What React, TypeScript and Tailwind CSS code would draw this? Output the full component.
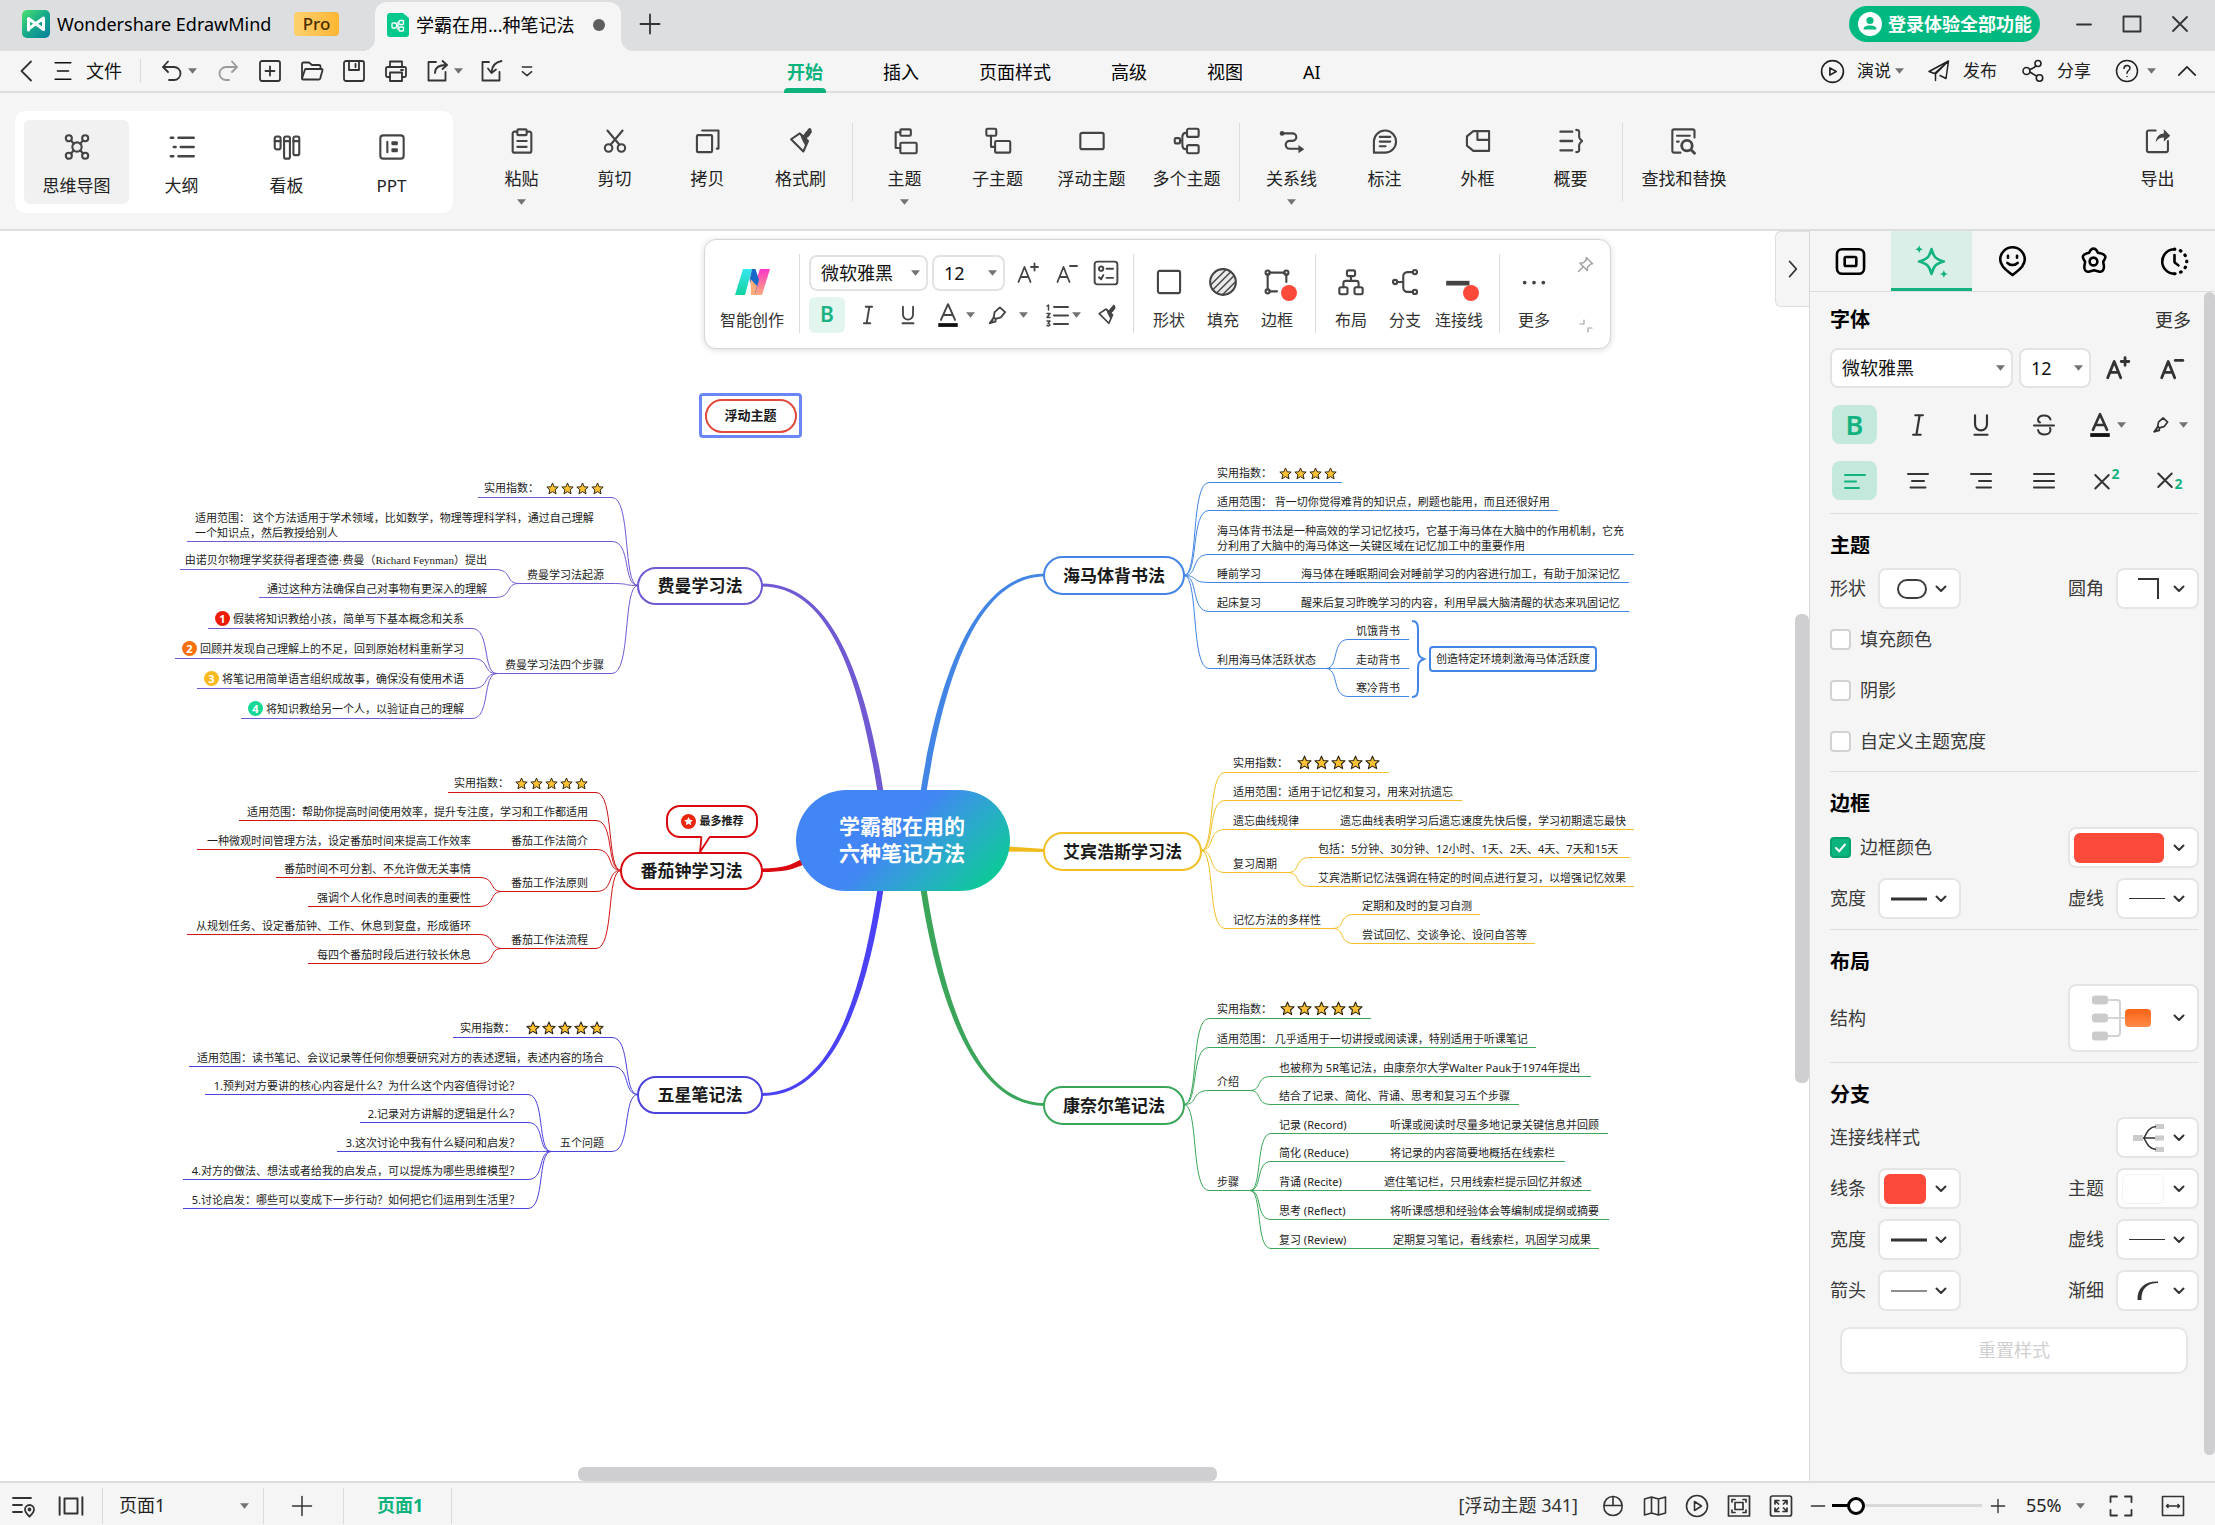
import React from "react";
import type { ReactNode } from "react";

/* ---------- shared bits ---------- */

type IcoProps = { s?: number; w?: number; className?: string; children: ReactNode };

function Ico({ s = 24, w = 1.6, className = "", children }: IcoProps) {
  return (
    <svg
      viewBox="0 0 24 24"
      width={s}
      height={s}
      fill="none"
      stroke="currentColor"
      strokeWidth={w}
      strokeLinecap="round"
      strokeLinejoin="round"
      className={"shrink-0 " + className}
      aria-hidden="true"
    >
      {children}
    </svg>
  );
}

function Caret({ className = "" }: { className?: string }) {
  return (
    <svg viewBox="0 0 10 6" width="9" height="6" className={"shrink-0 fill-[#737373] " + className} aria-hidden="true">
      <path d="M0 0h10L5 6z" />
    </svg>
  );
}

function Chevron() {
  return (
    <svg viewBox="0 0 12 8" width="12" height="8" fill="none" stroke="#333" strokeWidth="2" strokeLinecap="round" strokeLinejoin="round" className="shrink-0" aria-hidden="true">
      <path d="M1.500 1.500 6 6l4.500-4.500" />
    </svg>
  );
}

const fill = { fill: "currentColor", stroke: "none" };

const penPath = (
  <>
    <path d="M8 14 9 8.500 14.500 3.500 20 8.500 15.500 14 10 15.500z" />
    <path d="M8 14 4 20l6-1.500V15.500z" />
    <path d="M4 20l3-3" />
  </>
);

const brushPath = (
  <>
    <path d="M3.500 10.500 11 5.500l7 6.500-4 9z" />
    <path d="M11 5.500 14.500 7l1.500-2.500L19.500 2l2 2-2.500 4-2 1.500 1 2.500-2 5-3.500-7z" {...fill} />
    <path d="m19.500 2.500-4 5" strokeWidth="3" />
  </>
);

/* ---------- title bar ---------- */

function TitleBar() {
  return (
    <header className="flex h-[51px] shrink-0 items-center bg-[#dcdee0] pr-[26px] pb-[3px]">
      <svg viewBox="0 0 28 28" width="28" height="28" className="ml-[22px] shrink-0" aria-hidden="true">
        <defs>
          <linearGradient id="logo" x1="0" y1="0" x2="1" y2="1">
            <stop offset="0" stopColor="#4be36e" />
            <stop offset="0.500" stopColor="#16a98a" />
            <stop offset="1" stopColor="#087fa0" />
          </linearGradient>
        </defs>
        <rect width="28" height="28" rx="5" fill="url(#logo)" />
        <path d="M6.500 20V8.500l15 11V8l-15 11" fill="none" stroke="#fff" strokeWidth="3" strokeLinejoin="round" strokeLinecap="round" />
      </svg>
      <h1 className="ml-[7px] w-[218px] text-[18px] leading-6 whitespace-nowrap text-black">Wondershare EdrawMind</h1>
      <span className="ml-[19px] flex h-6 w-[45px] shrink-0 items-center justify-center rounded bg-linear-to-r from-[#fed06e] to-[#fdb62f] text-[17px] font-medium text-[#4a2e00]">Pro</span>
      <div className="relative -mb-[3px] ml-[36px] flex h-[49px] w-[246px] items-center self-end rounded-t-xl bg-[#f5f5f5] pb-1 pl-3">
        <span className="absolute bottom-0 -left-3 size-3 bg-[radial-gradient(circle_at_0_0,#dcdee0_12px,#f5f5f5_12px)]" />
        <span className="absolute -right-3 bottom-0 size-3 bg-[radial-gradient(circle_at_100%_0,#dcdee0_12px,#f5f5f5_12px)]" />
        <svg viewBox="0 0 22 24" width="22" height="24" className="shrink-0" aria-hidden="true">
          <path d="M3 0h13l6 5v16a3 3 0 0 1-3 3H3a3 3 0 0 1-3-3V3a3 3 0 0 1 3-3z" fill="#05c98c" />
          <g fill="none" stroke="#fff" strokeWidth="1.300">
            <rect x="5" y="10" width="4.500" height="5" rx="1" />
            <rect x="12" y="7.500" width="4.500" height="4" rx="1" />
            <rect x="12" y="14" width="4.500" height="4" rx="1" />
            <path d="M9.500 12.500H11M12 9.500h-1v6.500h1" />
          </g>
        </svg>
        <span className="ml-[7px] text-[18px] leading-6 whitespace-nowrap text-black">学霸在用...种笔记法</span>
        <span className="mr-4 ml-auto size-3 rounded-full bg-[#5e5e5e]" />
      </div>
      <button aria-label="新建标签" className="ml-[17px] text-[#333]">
        <Ico s={24} w={1.8}><path d="M12 2.500v19M2.500 12h19" /></Ico>
      </button>
      <button className="ml-auto flex h-9 items-center gap-[6px] rounded-full bg-[#00b980] pr-2 pl-[9px] text-[18px] font-bold whitespace-nowrap text-white">
        <svg viewBox="0 0 24 24" width="24" height="24" aria-hidden="true">
          <circle cx="12" cy="12" r="12" fill="#fff" />
          <circle cx="12" cy="8.500" r="3.600" fill="#00b980" />
          <path d="M5.500 17.500c0-3 2.500-4 6.500-4s6.500 1 6.500 4z" fill="#00b980" />
        </svg>
        登录体验全部功能
      </button>
      <button aria-label="最小化" className="ml-8 text-[#333]"><Ico s={24} w={1.8}><path d="M5 12.500h14" /></Ico></button>
      <button aria-label="最大化" className="ml-6 text-[#333]"><Ico s={24} w={1.8}><path d="M3.500 4.500h17v15h-17z" /></Ico></button>
      <button aria-label="关闭" className="mr-[-3px] ml-6 text-[#333]"><Ico s={24} w={1.8}><path d="m5 5 14 14M19 5 5 19" /></Ico></button>
    </header>
  );
}

/* ---------- menu row ---------- */

const quick: { label: string; ml: string; icon: ReactNode; caret?: boolean; dim?: boolean }[] = [
  { label: "撤销", ml: "ml-[19px]", caret: true, icon: <><path d="M8 2.500 3 8l5 5" /><path d="M3.500 8H14a6.500 6.500 0 0 1 0 13H9" /></> },
  { label: "重做", ml: "ml-[19px]", dim: true, icon: <><path d="m16 2.500 5 5.500-5 5" /><path d="M20.500 8H10a6.500 6.500 0 0 0 0 13h3" /></> },
  { label: "新建", ml: "ml-[18px]", icon: <><rect x="2" y="2" width="20" height="20" rx="2" /><path d="M12 7.500v9M7.500 12h9" /></> },
  { label: "打开", ml: "ml-[18px]", icon: <><path d="M2 19V5a1.500 1.500 0 0 1 1.500-1.500H9L12 6h7a1.500 1.500 0 0 1 1.500 1.500V10" /><path d="m2 19.500 3-9a1 1 0 0 1 1-.5h15.500a1 1 0 0 1 1 1.300l-2.300 8.200a1.500 1.500 0 0 1-1.400 1H3a1 1 0 0 1-1-1z" /></> },
  { label: "保存", ml: "ml-[18px]", icon: <><rect x="2" y="2" width="20" height="20" rx="2" /><path d="M7 2v9h10V2M13.500 5v3" /></> },
  { label: "打印", ml: "ml-[18px]", icon: <><path d="M6 8V2.500h12V8" /><path d="M6 18H3.500A1.500 1.500 0 0 1 2 16.500V9.500A1.500 1.500 0 0 1 3.500 8h17A1.500 1.500 0 0 1 22 9.500v7a1.500 1.500 0 0 1-1.500 1.500H18" /><path d="M6 13.500h12V22H6zM17 11h2" /></> },
  { label: "分享文件", ml: "ml-[18px]", caret: true, icon: <><path d="M10 3H2.500v18.500h17V13" /><path d="M9 14c0-5 4-8 11.500-8" /><path d="m16.500 2 4.500 4-4.500 4" /></> },
  { label: "导入", ml: "ml-[17px]", icon: <><path d="M9 3H2.500v18.500h17V13" /><path d="M21.500 2C16 3 12 7 11.500 13" /><path d="m8 9.500 3.500 4.500 4.500-3.500" /></> },
];

function MenuRow() {
  return (
    <nav className="relative flex h-[42px] shrink-0 items-center border-b-2 border-[#dddddd] bg-[#f5f5f5] text-[#333]">
      <button aria-label="返回" className="ml-[14px]"><Ico s={24} w={1.8}><path d="M17 2.500 7.500 12l9.500 9.500" /></Ico></button>
      <button className="ml-[14px] flex items-center gap-3 text-[18px] text-[#111]">
        <Ico s={22} w={1.8}><path d="M3.500 3h17M6 12h12M3.500 21h17" /></Ico>
        文件
      </button>
      <span className="ml-[18px] h-6 w-px bg-[#dadada]" />
      {quick.map((q) => (
        <button key={q.label} aria-label={q.label} className={"flex items-center gap-[4px] " + q.ml + (q.dim ? " text-[#9a9a9a]" : "")}>
          <Ico s={24} w={1.8}>{q.icon}</Ico>
          {q.caret && <Caret />}
        </button>
      ))}
      <button aria-label="更多工具" className="ml-[15px]"><Ico s={16} w={2.200}><path d="M5 6h14M5 13l7 6 7-6" /></Ico></button>
      <div className="absolute top-0 left-[787px] flex h-[42px] items-center gap-[60px] text-[18px] whitespace-nowrap text-black">
        <a href="#start" className="relative flex h-[42px] items-center font-bold text-[#0db27d]">
          开始
          <span className="absolute -inset-x-[3px] bottom-0 h-[5px] rounded-t bg-[#0db27d]" />
        </a>
        <a href="#insert">插入</a>
        <a href="#page">页面样式</a>
        <a href="#advanced">高级</a>
        <a href="#view">视图</a>
        <a href="#ai">AI</a>
      </div>
      <div className="ml-auto flex items-center pr-[17px] text-[17px] whitespace-nowrap text-[#222]">
        <button className="flex items-center">
          <Ico s={25} w={1.6}><circle cx="12" cy="12" r="10.500" /><path d="M9.500 8.500v7l6-3.500z" /></Ico>
          <span className="ml-3">演说</span>
          <Caret className="ml-1" />
        </button>
        <button className="ml-[23px] flex items-center gap-3">
          <Ico s={24} w={1.5}><path d="M21.500 2 2 12.500l5.500 2zM21.500 2 19 19.500l-6-3M21.500 2 8.500 15v6.500" /></Ico>
          发布
        </button>
        <button className="ml-6 flex items-center gap-3">
          <Ico s={24} w={1.6}><circle cx="5.500" cy="12" r="3.500" /><circle cx="17" cy="4.500" r="3" /><circle cx="18.500" cy="19" r="3.200" /><path d="M8.500 10.500C12 9.500 13.500 9 15 6.800M8.800 13l6.700 4" /></Ico>
          分享
        </button>
        <button aria-label="帮助" className="ml-6 flex items-center gap-2">
          <Ico s={24} w={1.500}><circle cx="12" cy="12" r="10.500" /><path d="M9 9.500c0-4 6-4 6-.5 0 2.500-3 2.500-3 5.200M12 17.500v.1" /></Ico>
          <Caret />
        </button>
        <button aria-label="收起" className="ml-5"><Ico s={22} w={1.800}><path d="m3 16.500 9-9 9 9" /></Ico></button>
      </div>
    </nav>
  );
}

/* ---------- ribbon ---------- */

const ic = {
  mind: <><circle cx="12" cy="12" r="4" /><circle cx="5" cy="4.500" r="2.600" /><circle cx="19" cy="4.500" r="2.600" /><circle cx="5" cy="19.500" r="2.600" /><circle cx="19" cy="19.500" r="2.600" /><path d="m6.800 6.500 2.500 2.700M17.200 6.500l-2.500 2.700M6.800 17.500l2.500-2.700M17.200 17.500l-2.500-2.700" /></>,
  outline: <><path d="M2.500 4h2M9 4h13M5 12h1.500M11 12h11M2.500 20h2M9 20h13" strokeWidth="2.200" /></>,
  board: <><rect x="1.500" y="3" width="5" height="11" rx="1.500" /><rect x="9.500" y="3" width="5" height="19" rx="1.500" /><rect x="17.500" y="3" width="5" height="16" rx="1.500" /><path d="M1.500 7h5M9.500 7h5M17.500 7h5" /></>,
  ppt: <><rect x="2" y="2" width="20" height="20" rx="2.500" /><path d="M8 7.500v9" /><rect x="11.500" y="7" width="5.500" height="3.500" rx="1" {...fill} /><rect x="11.500" y="13" width="5.500" height="3.500" rx="1" {...fill} /></>,
  paste: <><path d="M7.500 4H5.500A1.500 1.500 0 0 0 4 5.500v15A1.500 1.500 0 0 0 5.500 22h13a1.500 1.500 0 0 0 1.500-1.500v-15A1.500 1.500 0 0 0 18.500 4h-2" /><rect x="8" y="2" width="8" height="5" rx="1" /><path d="M8 12h8M8 17h8" /></>,
  cut: <><circle cx="6.500" cy="18" r="3.200" /><circle cx="17.500" cy="18" r="3.200" /><path d="M5.500 3 15.800 15.200M18.500 3 8.200 15.200" /></>,
  copy: <><rect x="2.500" y="7" width="13" height="14.500" rx="1" /><path d="M7 3h14v15.500h-1.500" /></>,
  topic: <><rect x="8" y="2" width="9" height="5.500" rx="1" /><rect x="8" y="13.500" width="14" height="9" rx="1" /><path d="M8 4.500H4V18h4" /></>,
  sub: <><rect x="2" y="1.500" width="8.500" height="6" rx="1" /><rect x="9.500" y="12" width="13" height="10" rx="1" /><path d="M6 7.500V17h3.500" /></>,
  float: <><rect x="2" y="5" width="20" height="14" rx="1.500" /></>,
  multi: <><rect x="1.500" y="9.500" width="4.500" height="4.500" rx="1" /><rect x="12" y="1.500" width="10" height="7" rx="1.500" /><rect x="12" y="15.500" width="10" height="7" rx="1.500" /><path d="M6 11.800h2M12 5H11c-2.500 0-3 1.500-3 4v5.500c0 3 .5 4.500 3 4.500h1" /></>,
  rel: <><circle cx="3.500" cy="5.500" r="2" {...fill} /><path d="M4 5.500h8.500a3.200 3.200 0 0 1 0 6.400H10a3.400 3.400 0 0 0 0 6.800h9" /><path d="M17.500 15.500v7L22.500 19z" {...fill} /></>,
  note: <><path d="M2.500 12A9.500 9.500 0 1 1 12 22H2.500z" /><path d="M7.500 8.500h9M7.500 12.500h9M7.500 16.500h5" /></>,
  frame: <><path d="M8 3.500h13.500v17H8L2.500 16V8z" /><path d="M11.500 3.500V11h10" /></>,
  summary: <><path d="M3 4h10M3 12h10M3 20h10" strokeWidth="2" /><path d="M16.500 2.500c4 0 2 3 2.500 6 .3 2.500 2.500 3 2.500 3.500s-2.200 1-2.500 3.500c-.5 3 1.500 6-2.500 6" /></>,
  find: <><path d="M9 22H3.500A1.500 1.500 0 0 1 2 20.500v-17A1.500 1.500 0 0 1 3.500 2h16A1.500 1.500 0 0 1 21 3.500V9" /><path d="M6 7.500h11M6 12.500h1.500" /><circle cx="14.500" cy="16" r="4.500" strokeWidth="2.400" /><path d="m18 19.500 3 3" strokeWidth="2.400" /></>,
  exp: <><path d="M10 3H4a1.500 1.500 0 0 0-1.500 1.500v15.500A1.500 1.500 0 0 0 4 21.500h15a1.500 1.500 0 0 0 1.500-1.500v-8" /><path d="M10 13c.5-5 3.500-7.500 7-7.500V2l5.500 5.500-5.500 5V9C14 9 12 10 10 13z" {...fill} /></>,
};

function RibbonButton({ icon, label, caret, width = "w-[93px]" }: { icon: ReactNode; label: string; caret?: boolean; width?: string }) {
  return (
    <button className={"flex shrink-0 flex-col items-center pt-[34px] text-[#444] " + width}>
      <Ico s={28} w={1.800}>{icon}</Ico>
      <span className="mt-3 text-[17px] leading-6 whitespace-nowrap text-[#222]">{label}</span>
      {caret && <Caret className="mt-2" />}
    </button>
  );
}

const Rule = () => <span className="mx-[5px] mt-[30px] h-[78px] w-px shrink-0 bg-[#dcdcdc]" />;

function Ribbon() {
  const views: [string, ReactNode][] = [["思维导图", ic.mind], ["大纲", ic.outline], ["看板", ic.board], ["PPT", ic.ppt]];
  return (
    <section className="flex h-[138px] shrink-0 items-start border-b-2 border-[#dddddd] bg-[#f5f5f5]">
      <div className="mt-[18px] ml-[15px] flex h-[102px] w-[438px] shrink-0 items-center rounded-[10px] bg-white pl-[9px]">
        {views.map(([label, icon], i) => (
          <button key={label} className={"flex h-[84px] w-[105px] flex-col items-center rounded-md pt-[13px] text-[#444] " + (i === 0 ? "bg-[#f1f1f1]" : "")}>
            <Ico s={28} w={1.800}>{icon}</Ico>
            <span className="mt-[13px] text-[17px] leading-6 text-[#222]">{label}</span>
          </button>
        ))}
      </div>
      <div className="ml-[22px] flex flex-1 items-start">
        <RibbonButton icon={ic.paste} label="粘贴" caret />
        <RibbonButton icon={ic.cut} label="剪切" />
        <RibbonButton icon={ic.copy} label="拷贝" />
        <RibbonButton icon={brushPath} label="格式刷" />
        <Rule />
        <RibbonButton icon={ic.topic} label="主题" caret />
        <RibbonButton icon={ic.sub} label="子主题" />
        <RibbonButton icon={ic.float} label="浮动主题" width="w-[95px]" />
        <RibbonButton icon={ic.multi} label="多个主题" width="w-[95px]" />
        <Rule />
        <RibbonButton icon={ic.rel} label="关系线" caret />
        <RibbonButton icon={ic.note} label="标注" />
        <RibbonButton icon={ic.frame} label="外框" />
        <RibbonButton icon={ic.summary} label="概要" />
        <Rule />
        <RibbonButton icon={ic.find} label="查找和替换" width="w-[112px]" />
      </div>
      <div className="pr-[11px]">
        <RibbonButton icon={ic.exp} label="导出" />
      </div>
    </section>
  );
}

/* ---------- mind map ---------- */

const VIEW_Y = 231;

type Stars = { n: number; size: number; gap: number; lead: number };
type Topic = {
  x1: number;
  x2: number;
  y: number;
  text: string;
  latin?: boolean;
  lines?: 2;
  stars?: Stars;
  badge?: [string, string];
  to?: [number, number];
};
type Branch = { color: string; side: "l" | "r"; topics: Topic[] };

const branches: Branch[] = [
  {
    color: "#7059d3",
    side: "l",
    topics: [
      { x1: 478, x2: 612, y: 497, text: "实用指数：", stars: { n: 4, size: 13, gap: 2, lead: 7 }, to: [638, 585] },
      { x1: 187, x2: 612, y: 541, text: "适用范围： 这个方法适用于学术领域，比如数学，物理等理科学科，通过自己理解\n一个知识点，然后教授给别人", lines: 2, to: [638, 585] },
      { x1: 519, x2: 612, y: 583, text: "费曼学习法起源", to: [638, 585] },
      { x1: 180, x2: 495, y: 569, text: "由诺贝尔物理学奖获得者理查德·费曼（Richard Feynman）提出", latin: true, to: [519, 583] },
      { x1: 259, x2: 495, y: 597, text: "通过这种方法确保自己对事物有更深入的理解", to: [519, 583] },
      { x1: 497, x2: 612, y: 673, text: "费曼学习法四个步骤", to: [638, 585] },
      { x1: 208, x2: 472, y: 628, text: "假装将知识教给小孩，简单写下基本概念和关系", badge: ["1", "#ec1c06"], to: [497, 673] },
      { x1: 175, x2: 472, y: 658, text: "回顾并发现自己理解上的不足，回到原始材料重新学习", badge: ["2", "#fa700c"], to: [497, 673] },
      { x1: 197, x2: 472, y: 688, text: "将笔记用简单语言组织成故事，确保没有使用术语", badge: ["3", "#fab91e"], to: [497, 673] },
      { x1: 241, x2: 472, y: 718, text: "将知识教给另一个人，以验证自己的理解", badge: ["4", "#15d894"], to: [497, 673] },
    ],
  },
  {
    color: "#cf1212",
    side: "l",
    topics: [
      { x1: 448, x2: 596, y: 792, text: "实用指数：", stars: { n: 5, size: 13, gap: 2, lead: 6 }, to: [621, 870] },
      { x1: 239, x2: 596, y: 820, text: "适用范围：帮助你提高时间使用效率，提升专注度，学习和工作都适用", to: [621, 870] },
      { x1: 478, x2: 596, y: 849, text: "番茄工作法简介", to: [621, 870] },
      { x1: 197, x2: 479, y: 849, text: "一种微观时间管理方法，设定番茄时间来提高工作效率" },
      { x1: 502, x2: 596, y: 891, text: "番茄工作法原则", to: [621, 870] },
      { x1: 276, x2: 479, y: 877, text: "番茄时间不可分割、不允许做无关事情", to: [502, 891] },
      { x1: 308, x2: 479, y: 906, text: "强调个人化作息时间表的重要性", to: [502, 891] },
      { x1: 502, x2: 596, y: 948, text: "番茄工作法流程", to: [621, 870] },
      { x1: 187, x2: 479, y: 934, text: "从规划任务、设定番茄钟、工作、休息到复盘，形成循环", to: [502, 948] },
      { x1: 308, x2: 479, y: 963, text: "每四个番茄时段后进行较长休息", to: [502, 948] },
    ],
  },
  {
    color: "#4b42dc",
    side: "l",
    topics: [
      { x1: 453, x2: 612, y: 1037, text: "实用指数：", stars: { n: 5, size: 14, gap: 2, lead: 11 }, to: [638, 1094] },
      { x1: 189, x2: 612, y: 1066, text: "适用范围：读书笔记、会议记录等任何你想要研究对方的表述逻辑，表述内容的场合", to: [638, 1094] },
      { x1: 551, x2: 612, y: 1151, text: "五个问题", to: [638, 1094] },
      { x1: 205, x2: 528, y: 1094, text: "1.预判对方要讲的核心内容是什么？为什么这个内容值得讨论？", to: [551, 1151] },
      { x1: 360, x2: 528, y: 1122, text: "2.记录对方讲解的逻辑是什么？", to: [551, 1151] },
      { x1: 337, x2: 528, y: 1151, text: "3.这次讨论中我有什么疑问和启发？", to: [551, 1151] },
      { x1: 183, x2: 528, y: 1179, text: "4.对方的做法、想法或者给我的启发点，可以提炼为哪些思维模型？", to: [551, 1151] },
      { x1: 183, x2: 528, y: 1208, text: "5.讨论启发：哪些可以变成下一步行动？如何把它们运用到生活里？", to: [551, 1151] },
    ],
  },
  {
    color: "#4385e5",
    side: "r",
    topics: [
      { x1: 1209, x2: 1342, y: 482, text: "实用指数：", stars: { n: 4, size: 13, gap: 2, lead: 7 }, to: [1184, 575] },
      { x1: 1209, x2: 1558, y: 510, text: "适用范围： 背一切你觉得难背的知识点，刷题也能用，而且还很好用", to: [1184, 575] },
      { x1: 1209, x2: 1634, y: 554, text: "海马体背书法是一种高效的学习记忆技巧，它基于海马体在大脑中的作用机制，它充\n分利用了大脑中的海马体这一关键区域在记忆加工中的重要作用", lines: 2, to: [1184, 575] },
      { x1: 1209, x2: 1293, y: 582, text: "睡前学习", to: [1184, 575] },
      { x1: 1293, x2: 1629, y: 582, text: "海马体在睡眠期间会对睡前学习的内容进行加工，有助于加深记忆" },
      { x1: 1209, x2: 1293, y: 611, text: "起床复习", to: [1184, 575] },
      { x1: 1293, x2: 1629, y: 611, text: "醒来后复习昨晚学习的内容，利用早晨大脑清醒的状态来巩固记忆" },
      { x1: 1209, x2: 1326, y: 668, text: "利用海马体活跃状态", to: [1184, 575] },
      { x1: 1348, x2: 1409, y: 639, text: "饥饿背书", to: [1326, 668] },
      { x1: 1348, x2: 1409, y: 668, text: "走动背书", to: [1326, 668] },
      { x1: 1348, x2: 1409, y: 696, text: "寒冷背书", to: [1326, 668] },
    ],
  },
  {
    color: "#f2bf26",
    side: "r",
    topics: [
      { x1: 1225, x2: 1389, y: 772, text: "实用指数：", stars: { n: 5, size: 15, gap: 2, lead: 9 }, to: [1201, 850] },
      { x1: 1225, x2: 1462, y: 800, text: "适用范围：适用于记忆和复习，用来对抗遗忘", to: [1201, 850] },
      { x1: 1225, x2: 1332, y: 829, text: "遗忘曲线规律", to: [1201, 850] },
      { x1: 1332, x2: 1634, y: 829, text: "遗忘曲线表明学习后遗忘速度先快后慢，学习初期遗忘最快" },
      { x1: 1225, x2: 1288, y: 872, text: "复习周期", to: [1201, 850] },
      { x1: 1310, x2: 1630, y: 857, text: "包括：5分钟、30分钟、12小时、1天、2天、4天、7天和15天", to: [1288, 872] },
      { x1: 1310, x2: 1634, y: 886, text: "艾宾浩斯记忆法强调在特定的时间点进行复习，以增强记忆效果", to: [1288, 872] },
      { x1: 1225, x2: 1333, y: 928, text: "记忆方法的多样性", to: [1201, 850] },
      { x1: 1354, x2: 1480, y: 914, text: "定期和及时的复习自测", to: [1333, 928] },
      { x1: 1354, x2: 1535, y: 943, text: "尝试回忆、交谈争论、设问自答等", to: [1333, 928] },
    ],
  },
  {
    color: "#3ba55a",
    side: "r",
    topics: [
      { x1: 1209, x2: 1371, y: 1018, text: "实用指数：", stars: { n: 5, size: 15, gap: 2, lead: 8 }, to: [1184, 1104] },
      { x1: 1209, x2: 1536, y: 1047, text: "适用范围： 几乎适用于一切讲授或阅读课，特别适用于听课笔记", to: [1184, 1104] },
      { x1: 1209, x2: 1250, y: 1090, text: "介绍", to: [1184, 1104] },
      { x1: 1271, x2: 1591, y: 1076, text: "也被称为 5R笔记法，由康奈尔大学Walter Pauk于1974年提出", to: [1250, 1090] },
      { x1: 1271, x2: 1519, y: 1104, text: "结合了记录、简化、背诵、思考和复习五个步骤", to: [1250, 1090] },
      { x1: 1209, x2: 1250, y: 1190, text: "步骤", to: [1184, 1104] },
      { x1: 1271, x2: 1382, y: 1133, text: "记录 (Record)", to: [1250, 1190] },
      { x1: 1382, x2: 1608, y: 1133, text: "听课或阅读时尽量多地记录关键信息并回顾" },
      { x1: 1271, x2: 1382, y: 1161, text: "简化 (Reduce)", to: [1250, 1190] },
      { x1: 1382, x2: 1565, y: 1161, text: "将记录的内容简要地概括在线索栏" },
      { x1: 1271, x2: 1376, y: 1190, text: "背诵 (Recite)", to: [1250, 1190] },
      { x1: 1376, x2: 1591, y: 1190, text: "遮住笔记栏，只用线索栏提示回忆并叙述" },
      { x1: 1271, x2: 1382, y: 1219, text: "思考 (Reflect)", to: [1250, 1190] },
      { x1: 1382, x2: 1609, y: 1219, text: "将听课感想和经验体会等编制成提纲或摘要" },
      { x1: 1271, x2: 1385, y: 1248, text: "复习 (Review)", to: [1250, 1190] },
      { x1: 1385, x2: 1599, y: 1248, text: "定期复习笔记，看线索栏，巩固学习成果" },
    ],
  },
];

const mains = [
  { text: "费曼学习法", x: 637, y: 567, w: 126, h: 38, color: "#7059d3" },
  { text: "番茄钟学习法", x: 620, y: 852, w: 143, h: 38, color: "#d9090f" },
  { text: "五星笔记法", x: 637, y: 1076, w: 126, h: 38, color: "#4b42dc" },
  { text: "海马体背书法", x: 1043, y: 556, w: 142, h: 39, color: "#4385e5" },
  { text: "艾宾浩斯学习法", x: 1043, y: 832, w: 159, h: 39, color: "#f2bf26" },
  { text: "康奈尔笔记法", x: 1043, y: 1086, w: 142, h: 39, color: "#3ba55a" },
];

function link(t: Topic, side: "l" | "r") {
  if (!t.to) return "";
  const x = side === "l" ? t.x2 : t.x1;
  const dx = t.to[0] - x;
  return `M${x} ${t.y + 0.5}C${x + dx * 0.75} ${t.y + 0.5} ${x + dx * 0.4} ${t.to[1] + 0.5} ${t.to[0]} ${t.to[1] + 0.5}`;
}

function StarRow({ s }: { s: Stars }) {
  return (
    <span className="flex shrink-0" style={{ gap: s.gap, marginLeft: s.lead }}>
      {Array.from({ length: s.n }, (_, i) => (
        <svg key={i} viewBox="0 0 24 24" width={s.size} height={s.size} aria-hidden="true">
          <path d="m12 1.800 3 7 7.500.6-5.700 5 1.800 7.400L12 17.800l-6.600 4 1.800-7.400-5.700-5 7.500-.6z" fill="#fcc135" stroke="#2b2412" strokeWidth="1.800" strokeLinejoin="round" />
        </svg>
      ))}
    </span>
  );
}

function TopicBox({ t, side, color }: { t: Topic; side: "l" | "r"; color: string }) {
  const h = t.lines ? 33 : 19;
  return (
    <div
      className={
        "absolute flex items-end border-b px-2 text-[11px] leading-[15px] whitespace-pre text-[#1c1c1c] " +
        (side === "l" && !t.lines ? "justify-end" : "justify-start") +
        (t.stars || t.badge ? " pb-[2px]" : " pb-px") +
        (t.latin ? " font-['Liberation_Serif','Noto_Sans_CJK_SC',serif]" : "")
      }
      style={{ left: t.x1, top: t.y + 1 - h - VIEW_Y, width: t.x2 - t.x1, height: h, borderColor: color }}
    >
      {t.badge && (
        <span className="mr-[3px] flex size-[15px] shrink-0 items-center justify-center rounded-full text-[11px] font-bold text-white" style={{ backgroundColor: t.badge[1] }}>
          {t.badge[0]}
        </span>
      )}
      {t.text}
      {t.stars && <StarRow s={t.stars} />}
    </div>
  );
}

function MindMap() {
  return (
    <>
      <svg className="absolute inset-0 size-full" aria-hidden="true">
        <g transform="translate(0 -231)" fill="none">
          <path fill="#7059d3" d="M762 583.500C836 583.500 868 690 884 795L878 795C862 692 834 586.500 762 586.500z" />
          <path fill="#4385e5" d="M1045 573.500C971 573.500 936 690 920 795L926 795C942 692 973 576.500 1045 576.500z" />
          <path fill="#4b42f5" d="M762 1093C834 1093 862 990 878 886L884 886C868 992 836 1096 762 1096z" />
          <path fill="#3ba55a" d="M1045 1103C973 1103 942 990 926 886L920 886C936 992 971 1106 1045 1106z" />
          <path fill="#d9090f" d="M762 868.500C782 868.500 792 865 803 858L806 863C794 870 782 872 762 872z" />
          <path fill="#f2b91a" d="M1008 846.500 1045 849v3L1008 851.500z" />
          {branches.map((b) => (
            <path key={b.color} stroke={b.color} strokeWidth="1" d={b.topics.map((t) => link(t, b.side)).join("")} />
          ))}
          <path stroke="#4385e5" strokeWidth="2" d="M1412 621c5 0 6 3 6 9v19c0 6 1 8 6 10-5 2-6 4-6 10v19c0 6-1 9-6 9" />
        </g>
      </svg>
      {branches.map((b) => b.topics.map((t) => <TopicBox key={t.x1 + "-" + t.y} t={t} side={b.side} color={b.color} />))}
      {mains.map((m) => (
        <div
          key={m.text}
          className="absolute flex items-center justify-center rounded-full border-2 bg-white text-[17px] leading-6 font-bold whitespace-nowrap text-[#1a1a1a]"
          style={{ left: m.x, top: m.y - VIEW_Y, width: m.w, height: m.h, borderColor: m.color }}
        >
          {m.text}
        </div>
      ))}
      <div className="absolute top-[559px] left-[796px] flex h-[101px] w-[214px] items-center justify-center rounded-full bg-linear-135 from-[#4285f4] from-45% to-[#0cc898] to-90% pr-[2px] pb-[2px] text-center text-[21px] leading-[27px] font-bold text-white">
        学霸都在用的
        <br />
        六种笔记方法
      </div>
      <div className="absolute top-[415px] left-[1429px] flex h-[26px] w-[168px] items-center justify-center rounded border-2 border-[#4385e5] text-[11px] whitespace-nowrap text-[#1c1c1c]">创造特定环境刺激海马体活跃度</div>
      <div className="absolute top-[574px] left-[666px] flex h-[33px] w-[92px] items-center justify-center gap-1 rounded-[14px] border-2 border-[#d9090f] text-[11px] font-bold whitespace-nowrap text-[#1a1a1a]">
        <svg viewBox="0 0 16 16" width="15" height="15" aria-hidden="true">
          <circle cx="8" cy="8" r="8" fill="#f0250d" />
          <path d="m8 3.200 1.400 3 3.300.4-2.400 2.200.6 3.300L8 10.500l-2.900 1.600.6-3.300-2.400-2.200 3.300-.4z" fill="#fff" />
        </svg>
        最多推荐
      </div>
      <svg viewBox="0 0 16 18" width="16" height="18" className="absolute top-[604px] left-[697px]" aria-hidden="true">
        <path d="M4 1h9v2H4z" fill="#fff" />
        <path d="M4.500 1.500 3 17 13 1.500" fill="#fff" stroke="#d9090f" strokeWidth="1.800" strokeLinejoin="round" />
      </svg>
      <div className="absolute top-[162px] left-[699px] flex h-[45px] w-[103px] items-center justify-center rounded-sm border-[3px] border-[#6b86f6]">
        <div className="flex h-[34px] w-[92px] items-center justify-center rounded-full border-2 border-[#e04a3e] text-[13px] font-bold whitespace-nowrap text-[#1a1a1a]">浮动主题</div>
      </div>
    </>
  );
}

/* ---------- floating toolbar ---------- */

function FontSelect({ label, value, className }: { label: string; value: string; className: string }) {
  return (
    <div className={"relative shrink-0 " + className}>
      <select aria-label={label} defaultValue={value} className="h-full w-full appearance-none rounded-lg border-2 border-[#e3e3e3] bg-white pl-[10px] text-[18px] text-[#111]">
        <option>{value}</option>
      </select>
      <Caret className="pointer-events-none absolute top-1/2 right-2 -translate-y-1/2" />
    </div>
  );
}

const aPlus = <><path d="M2.500 21 8.500 6l6 15M4.700 16h7.600" /><path d="M18.500 2.500v7M15 6h7" /></>;
const aMinus = <><path d="M2.500 21 8.500 6l6 15M4.700 16h7.600" /><path d="M15 5h7" /></>;
const italic = <path d="M9.500 3h7M7.500 21h7M13.500 3l-3 18" />;
const underline = <path d="M6.500 3v8.500a5.500 5.500 0 0 0 11 0V3M6 21h12" />;
const fontColor = <><path d="M5.500 16.500 12 2l6.500 14.500M7.800 12h8.400" /><path d="M3 19.500h18v3.500H3z" fill="#111" stroke="none" /></>;

function Tool({ label, icon, children }: { label: string; icon: ReactNode; children?: ReactNode }) {
  return (
    <button className="relative flex w-[54px] shrink-0 flex-col items-center pt-[28px] text-[#444]">
      <Ico s={28} w={1.800}>{icon}</Ico>
      <span className="mt-[12px] text-[16px] leading-6 whitespace-nowrap text-[#333]">{label}</span>
      {children}
    </button>
  );
}

const Dot = () => <span className="absolute top-[45px] left-[31px] size-4 rounded-full bg-[#fb493a]" />;
const Bar = ({ className = "" }) => <span className={"mt-[14px] h-[79px] w-px shrink-0 bg-[#dcdcdc] " + className} />;

function FloatingToolbar() {
  return (
    <div className="absolute top-2 left-[704px] z-10 flex h-[110px] w-[907px] items-start rounded-xl border border-[#d6d6d6] bg-white shadow-[0_1px_6px_rgba(0,0,0,0.15)]">
      <button className="flex w-[94px] shrink-0 flex-col items-center pt-[28px]">
        <svg viewBox="0 0 36 28" width="36" height="28" aria-hidden="true">
          <defs>
            <linearGradient id="aiA" x1="0" y1="0" x2="0" y2="1"><stop offset="0" stopColor="#35e6f0" /><stop offset="1" stopColor="#12d3a0" /></linearGradient>
            <linearGradient id="aiB" x1="0" y1="0" x2="0" y2="1"><stop offset="0" stopColor="#fc35c8" /><stop offset="1" stopColor="#ffab7c" /></linearGradient>
          </defs>
          <path d="M9 1h9l-7 26H1z" fill="url(#aiA)" />
          <path d="M26 1h10l-8 26H17z" fill="url(#aiB)" />
          <path d="M18 1h3.500l3.500 11-4 14-5.500-14z" fill="#1768c8" />
          <path d="M16.500 11 23 18l-2.500 9H17z" fill="#ffab7c" />
        </svg>
        <span className="mt-[12px] text-[16px] leading-6 text-[#333]">智能创作</span>
      </button>
      <Bar />
      <div className="w-[333px] shrink-0 pt-[15px] pl-[9px] text-[#444]">
        <div className="flex h-9 items-center">
          <FontSelect label="字体" value="微软雅黑" className="h-9 w-[119px]" />
          <FontSelect label="字号" value="12" className="ml-1 h-9 w-[73px]" />
          <button aria-label="增大字号" className="ml-[3px] flex w-[39px] justify-center"><Ico s={24} w={1.800}>{aPlus}</Ico></button>
          <button aria-label="减小字号" className="flex w-[39px] justify-center"><Ico s={24} w={1.800}>{aMinus}</Ico></button>
          <button aria-label="任务" className="flex w-[40px] justify-center">
            <Ico s={26} w={1.800}><rect x="1.500" y="1.500" width="21" height="21" rx="2.500" /><circle cx="7.500" cy="8" r="2" /><path d="M12.500 8h6M12.500 16.500h6M5.500 16l2 1.800 2-3.800" /></Ico>
          </button>
        </div>
        <div className="mt-[6px] flex h-9 items-center">
          <button aria-label="加粗" className="flex h-9 w-9 items-center justify-center rounded-md bg-[#e2f5ef] text-[21px] font-semibold text-[#1db184]">B</button>
          <button aria-label="斜体" className="ml-[3px] flex w-10 justify-center"><Ico s={22} w={2}>{italic}</Ico></button>
          <button aria-label="下划线" className="flex w-10 justify-center"><Ico s={22} w={2}>{underline}</Ico></button>
          <button aria-label="字体颜色" className="flex w-[54px] items-center gap-[5px] pl-[7px]"><Ico s={26} w={1.800}>{fontColor}</Ico><Caret /></button>
          <button aria-label="高亮" className="flex w-[54px] items-center gap-[10px] pl-1"><Ico s={23} w={1.900}>{penPath}</Ico><Caret /></button>
          <button aria-label="编号" className="flex w-[50px] items-center gap-[3px] pl-[9px]">
            <Ico s={24} w={2}><path d="M9 4h14M9 12.500h14M9 21h14" /><path d="M2 3l1.500-1v5M2 10.500h3l-3 4h3M2 18h3l-2 2.500c3 0 2 3.500-1 2" strokeWidth="1.500" /></Ico>
            <Caret />
          </button>
          <button aria-label="格式刷" className="flex w-[42px] justify-center"><Ico s={22} w={1.900}>{brushPath}</Ico></button>
        </div>
      </div>
      <Bar />
      <div className="flex w-[181px] shrink-0 pl-2">
        <Tool label="形状" icon={<rect x="2.500" y="2.500" width="19" height="19" rx="1.500" />} />
        <Tool label="填充" icon={<><circle cx="12" cy="12" r="11" fill="#e9e9e9" /><path d="M2 14 14 2M3.500 18.500l15-15M7 21 21 7M12 22.500 22.500 12" strokeWidth="1.200" /></>} />
        <Tool label="边框" icon={<><path d="M4 5.500v13M20 5.500V12M5.500 4h13M5.500 20H12" /><circle cx="4" cy="4" r="1.800" /><circle cx="20" cy="4" r="1.800" /><circle cx="4" cy="20" r="1.800" /></>}><Dot /></Tool>
      </div>
      <Bar />
      <div className="flex w-[183px] shrink-0 pl-2">
        <Tool label="布局" icon={<><rect x="8.500" y="2" width="7" height="5" rx="1.500" /><rect x="2" y="16.500" width="7" height="6" rx="1.500" /><rect x="15" y="16.500" width="7" height="6" rx="1.500" /><path d="M12 7v4M5.500 16.500V13a2 2 0 0 1 2-2h9a2 2 0 0 1 2 2v3.500" /></>} />
        <Tool label="分支" icon={<><circle cx="3.500" cy="12" r="1.800" /><circle cx="20.500" cy="3.500" r="1.800" /><circle cx="20.500" cy="20.500" r="1.800" /><path d="M5.500 12h5M18.500 3.500H14A3.500 3.500 0 0 0 10.500 7v10a3.500 3.500 0 0 0 3.500 3.500h4.500" /></>} />
        <Tool label="连接线" icon={<path d="M1 13h20" strokeWidth="4" strokeLinecap="butt" />}><Dot /></Tool>
      </div>
      <Bar />
      <div className="flex flex-1 pl-[7px]">
        <Tool label="更多" icon={<><circle cx="4" cy="12.500" r="1.600" {...fill} /><circle cx="12" cy="12.500" r="1.600" {...fill} /><circle cx="20" cy="12.500" r="1.600" {...fill} /></>} />
        <div className="flex h-[106px] flex-1 flex-col items-center justify-between pt-4 pb-3 text-[#a0a0a0]">
          <button aria-label="固定"><Ico s={17} w={2}><path d="m13 2 9 9-3 .5-4 4-.5 5L4 10l5-.500 4-4zM8.500 15.500 2 22" /></Ico></button>
          <button aria-label="折叠"><Ico s={16} w={1.800}><path d="M3 9h6V3M21 15h-6v6" /></Ico></button>
        </div>
      </div>
    </div>
  );
}

/* ---------- format panel ---------- */

const Heading = ({ children }: { children: ReactNode }) => <h2 className="flex h-[54px] items-center pt-[10px] text-[20px] font-bold text-black">{children}</h2>;
const Divider = ({ className = "mt-[10px]" }) => <hr className={"h-px border-0 bg-[#dedede] " + className} />;

function Picker({ label, children, size = "h-[41px] w-[83px]" }: { label: string; children: ReactNode; size?: string }) {
  return (
    <button aria-label={label} aria-haspopup="listbox" className={"flex shrink-0 items-center justify-between rounded-lg border-2 border-[#e5e5e5] bg-white pr-[12px] pl-1 " + size}>
      {children}
      <Chevron />
    </button>
  );
}

function Field({ label, children }: { label: string; children: ReactNode }) {
  return (
    <div className="flex items-center">
      <span className="w-12 text-[18px] whitespace-nowrap text-[#3a3a3a]">{label}</span>
      <Picker label={label}>{children}</Picker>
    </div>
  );
}

const Sketch = ({ children }: { children: ReactNode }) => (
  <svg viewBox="0 0 44 30" width="44" height="30" fill="none" className="shrink-0" aria-hidden="true">{children}</svg>
);

function Check({ label, id, checked }: { label: string; id: string; checked?: boolean }) {
  return (
    <div className="flex h-[51px] items-center gap-[9px]">
      <span className="relative flex">
        <input id={id} type="checkbox" defaultChecked={checked} className="peer size-[21px] appearance-none rounded border-2 border-[#d2d2d2] bg-white checked:border-[#08a06f] checked:bg-[#0bb57d]" />
        <svg viewBox="0 0 21 21" width="21" height="21" fill="none" stroke="#fff" strokeWidth="2" strokeLinecap="round" className="pointer-events-none absolute inset-0 hidden peer-checked:block" aria-hidden="true">
          <path d="m6 11 3.200 3.200L15 7.500" />
        </svg>
      </span>
      <label htmlFor={id} className="text-[18px] text-[#3a3a3a]">{label}</label>
    </div>
  );
}

function PanelTabs() {
  const tabs: [string, ReactNode][] = [
    ["页面", <><rect x="1.500" y="2.500" width="21" height="19" rx="4" /><rect x="7.500" y="8.500" width="9" height="7" rx="1" /></>],
    ["样式", <><path d="M12 3c1.500 5.500 3 7.500 9 9-6 1.500-7.500 3.500-9 9-1.500-5.500-3-7.500-9-9 6-1.500 7.500-3.500 9-9z" strokeWidth="1.900" /><path d="M3 0c.4 2 1 2.600 3 3-2 .4-2.600 1-3 3-.4-2-1-2.600-3-3 2-.4 2.600-1 3-3zM21 18c.4 2 1 2.600 3 3-2 .4-2.600 1-3 3-.4-2-1-2.600-3-3 2-.4 2.600-1 3-3z" {...fill} /></>],
    ["图标", <><path d="M12 22.500c-2-2-9.500-5.500-9.500-12a9.500 9.500 0 0 1 19 0c0 6.500-7.500 10-9.500 12z" /><path d="M8.500 7.500v1.500M15.500 7.500v1.500M8 13c2 2.300 6 2.300 8 0" /></>],
    ["贴纸", <><path d="M9.500 3.500c1.500-2 3.500-2 5 0l1 1.800 2.500.5c3 .7 4 2.500 2.500 4.700l-1 1.700.5 3c.4 3-1 5.500-4 4.500l-3.500-1-3.500 1c-3 1-4.500-1.500-4-4.500l.5-3-1-1.700C3 8.300 4 6.500 6.500 5.800l2-.5z" /><circle cx="12" cy="12" r="3" /></>],
    ["历史", <><path d="M12 2.500a9.500 9.500 0 0 0 0 19" /><path d="M12 7v5.500l3 2.500" /><path d="M12 21.500a9.500 9.500 0 0 0 0-19" strokeDasharray="0.500 4.400" strokeWidth="2.500" /></>],
  ];
  return (
    <div role="tablist" className="grid h-[61px] shrink-0 grid-cols-5 border-b border-[#dcdcdc]">
      {tabs.map(([label, icon], i) => (
        <button key={label} role="tab" aria-label={label} aria-selected={i === 1} className={"flex items-center justify-center " + (i === 1 ? "border-b-[3px] border-[#12b380] bg-[#dbefe9] pt-[3px] text-[#12b380]" : "text-black")}>
          <Ico s={i === 1 ? 33 : 31} w={2}>{icon}</Ico>
        </button>
      ))}
    </div>
  );
}

function TextButton({ label, on, children }: { label: string; on?: boolean; children: ReactNode }) {
  return (
    <button aria-label={label} className={"flex h-[39px] w-[45px] items-center justify-center gap-1 justify-self-center rounded-lg " + (on ? "bg-[#c3e9dc] text-[#12b380]" : "text-[#333]")}>
      {children}
    </button>
  );
}

function FormatPanel() {
  return (
    <aside className="relative flex w-[406px] shrink-0 flex-col border-l border-[#d9d9d9] bg-[#f5f5f5]">
      <PanelTabs />
      <div className="flex-1 pr-4 pl-5">
        <div className="flex h-[56px] items-center justify-between pr-2">
          <h2 className="text-[20px] font-bold text-black">字体</h2>
          <a href="#more" className="text-[18px] text-[#333]">更多</a>
        </div>
        <div className="flex items-center">
          <FontSelect label="字体" value="微软雅黑" className="h-10 w-[183px]" />
          <FontSelect label="字号" value="12" className="ml-[6px] h-10 w-[72px]" />
          <button aria-label="增大字号" className="flex w-[55px] justify-center text-[#333]"><Ico s={26} w={2.600}>{aPlus}</Ico></button>
          <button aria-label="减小字号" className="flex w-[54px] justify-center text-[#333]"><Ico s={26} w={2.600}>{aMinus}</Ico></button>
        </div>
        <div className="mt-[17px] -mr-[2px] -ml-[7px] grid grid-cols-6 gap-y-[17px]">
          <TextButton label="加粗" on><span className="text-[27px] leading-none font-semibold">B</span></TextButton>
          <TextButton label="斜体"><Ico s={26} w={2}>{italic}</Ico></TextButton>
          <TextButton label="下划线"><Ico s={26} w={2}>{underline}</Ico></TextButton>
          <TextButton label="删除线"><Ico s={24} w={2}><path d="M18.500 6.500C17 1 7 1 6 6.500 6 8 6.500 9 8 9.500M2 12.500h20M6 17c1.500 6 12 6 12.500 0 0-1 0-1.500-.5-2" /></Ico></TextButton>
          <TextButton label="字体颜色"><Ico s={26} w={2.400}>{fontColor}</Ico><Caret /></TextButton>
          <TextButton label="高亮"><Ico s={20} w={2}>{penPath}</Ico><Caret className="ml-1" /></TextButton>
          <TextButton label="左对齐" on><Ico s={24} w={2}><path d="M2 6h20M2 12.500h11M2 19h14" /></Ico></TextButton>
          <TextButton label="居中"><Ico s={24} w={2}><path d="M2 5h20M6 12h12M4.500 18.500h15" /></Ico></TextButton>
          <TextButton label="右对齐"><Ico s={24} w={2}><path d="M2 5h20M10 12h12M7.500 18.500H22" /></Ico></TextButton>
          <TextButton label="两端对齐"><Ico s={24} w={2}><path d="M2 5h20M2 12h20M2 18.500h20" /></Ico></TextButton>
          <TextButton label="上标"><Ico s={18} w={2.600}><path d="m3 4 18 18M21 4 3 22" /></Ico><sup className="-ml-1 text-[14px] font-bold text-[#12b380]">2</sup></TextButton>
          <TextButton label="下标"><Ico s={18} w={2.600}><path d="m3 2 18 18M21 2 3 20" /></Ico><sub className="-ml-1 text-[14px] font-bold text-[#12b380]">2</sub></TextButton>
        </div>
        <Divider className="mt-[13px]" />

        <Heading>主题</Heading>
        <div className="flex justify-between">
          <Field label="形状"><span className="ml-[13px] h-5 w-[30px] rounded-full border-2 border-[#3c3c3c]" /></Field>
          <Field label="圆角"><Sketch><path d="M16 5h20v20" stroke="#333" strokeWidth="2" /></Sketch></Field>
        </div>
        <div className="mt-[5px]">
          <Check id="fill" label="填充颜色" />
          <Check id="shadow" label="阴影" />
          <Check id="width" label="自定义主题宽度" />
        </div>
        <Divider className="mt-1" />

        <Heading>边框</Heading>
        <div className="mt-px flex h-[41px] items-center justify-between">
          <Check id="border" label="边框颜色" checked />
          <Picker label="边框颜色" size="h-[41px] w-[131px]"><span className="h-[30px] w-[90px] rounded-md bg-[#fb493a]" /></Picker>
        </div>
        <div className="mt-[10px] flex justify-between">
          <Field label="宽度"><Sketch><path d="M7 15h36" stroke="#333" strokeWidth="3" /></Sketch></Field>
          <Field label="虚线"><Sketch><path d="M7 14.500h36" stroke="#333" strokeWidth="1" /></Sketch></Field>
        </div>
        <Divider />

        <Heading>布局</Heading>
        <div className="flex items-center justify-between">
          <span className="text-[18px] text-[#3a3a3a]">结构</span>
          <Picker label="结构" size="h-[68px] w-[131px]">
            <svg viewBox="0 0 80 50" width="80" height="50" className="ml-1.5" fill="none" aria-hidden="true">
              <defs><linearGradient id="org" x1="0" y1="0" x2="0" y2="1"><stop offset="0" stopColor="#fa6414" /><stop offset="1" stopColor="#ff8a48" /></linearGradient></defs>
              <path d="M27 7h10q3 0 3 3v30q0 3-3 3H27M27 25h22" stroke="#d3d3d3" strokeWidth="2" />
              <g fill="#cbcbcb"><rect x="12" y="2.500" width="16" height="9" rx="3" /><rect x="12" y="20.500" width="16" height="9" rx="3" /><rect x="12" y="38.500" width="16" height="9" rx="3" /></g>
              <rect x="45" y="16" width="26" height="18" rx="4" fill="url(#org)" />
            </svg>
          </Picker>
        </div>
        <Divider />

        <Heading>分支</Heading>
        <div className="flex flex-col gap-[10px]">
          <div className="flex items-center justify-between">
            <span className="text-[18px] text-[#3a3a3a]">连接线样式</span>
            <Picker label="连接线样式">
              <Sketch>
                <g fill="#cbcbcb"><rect x="11" y="12" width="10" height="6" /><rect x="33" y="1" width="9" height="5" /><rect x="33" y="12.500" width="9" height="5" /><rect x="33" y="24" width="9" height="5" /></g>
                <path d="M21 15h12M22 15C26 7 28 4 34 3.500M22 15c4 8 6 11 12 11.500" stroke="#333" strokeWidth="1.600" />
              </Sketch>
            </Picker>
          </div>
          <div className="flex justify-between">
            <Field label="线条"><span className="h-[30px] w-[42px] rounded-md bg-[#fb493a]" /></Field>
            <Field label="主题"><span className="h-[30px] w-[42px] rounded-md border border-[#f3f3f3] bg-white" /></Field>
          </div>
          <div className="flex justify-between">
            <Field label="宽度"><Sketch><path d="M7 15h36" stroke="#333" strokeWidth="3" /></Sketch></Field>
            <Field label="虚线"><Sketch><path d="M7 14.500h36" stroke="#333" strokeWidth="1" /></Sketch></Field>
          </div>
          <div className="flex justify-between">
            <Field label="箭头"><Sketch><path d="M7 15h36" stroke="#8d8d8d" strokeWidth="2" /></Sketch></Field>
            <Field label="渐细"><Sketch><path d="M15.500 24C15 12 23 5 36 5.500v1.500C25 7 19 13 19.500 24z" fill="#333" /></Sketch></Field>
          </div>
        </div>
        <button disabled className="mt-4 ml-[10px] block h-[47px] w-[348px] rounded-[10px] border-2 border-[#e5e5e5] bg-white text-[18px] text-[#d0d0d0]">重置样式</button>
      </div>
      <span className="absolute top-[61px] right-0 bottom-[26px] w-[11px] rounded-md bg-[#cfcfd1]" />
    </aside>
  );
}

/* ---------- status bar ---------- */

function StatusBar() {
  return (
    <footer className="flex h-[44px] shrink-0 items-center border-t-2 border-[#dcdcdc] bg-[#f5f5f5] pt-[3px] text-[18px] whitespace-nowrap text-[#333]">
      <button aria-label="大纲" className="ml-3"><Ico s={24} w={1.800}><path d="M1 4h18M1 11h9M1 18h9" /><path d="M17.500 22.500c-2-2-4.500-4-4.500-7a4.500 4.500 0 0 1 9 0c0 3-2.500 5-4.500 7z" /><circle cx="17.500" cy="15.500" r="1" /></Ico></button>
      <button aria-label="视图模式" className="ml-[22px]"><Ico s={26} w={1.800}><rect x="6" y="5" width="12" height="14" /><path d="M1.500 4v16M22.500 4v16" /></Ico></button>
      <span className="ml-[18px] h-[36px] w-px bg-[#dadada]" />
      <div className="relative ml-4 w-[138px]">
        <select aria-label="页面" defaultValue="页面1" className="w-full appearance-none bg-transparent text-[18px] text-[#222]"><option>页面1</option></select>
        <Caret className="pointer-events-none absolute top-1/2 right-2 -translate-y-1/2" />
      </div>
      <span className="ml-[6px] h-[36px] w-px bg-[#dadada]" />
      <button aria-label="添加页面" className="ml-[26px]"><Ico s={24} w={1.500}><path d="M12 2.500v19M2.500 12h19" /></Ico></button>
      <span className="ml-[29px] h-[36px] w-px bg-[#dadada]" />
      <button className="ml-[33px] font-bold text-[#0db27d]">页面1</button>
      <span className="ml-[28px] h-[36px] w-px bg-[#dadada]" />
      <span className="ml-auto text-[18px]">[浮动主题 341]</span>
      <button aria-label="鼠标" className="ml-[23px]"><Ico s={24} w={1.600}><path d="M12 2.500a9 9 0 0 0-9 9v2a9 8 0 0 0 18 0v-2a9 9 0 0 0-9-9z" /><path d="M3 11.500h18M12 2.500v9" /></Ico></button>
      <button aria-label="导航" className="ml-[18px]"><Ico s={24} w={1.600}><path d="m1.500 5 7-2 7 2 7-2v16l-7 2-7-2-7 2zM8.500 3v16M15.500 5v16" /></Ico></button>
      <button aria-label="播放" className="ml-[18px]"><Ico s={24} w={1.600}><circle cx="12" cy="12" r="10.500" /><path d="M9.500 7.500v9l7-4.500z" /></Ico></button>
      <button aria-label="适应" className="ml-[18px]"><Ico s={24} w={1.700}><rect x="1.500" y="2" width="21" height="20" /><rect x="8" y="8.500" width="8" height="7" /><path d="M5 8V5.500h3M16 5.500h3V8M19 16v2.500h-3M8 18.500H5V16" /></Ico></button>
      <button aria-label="居中" className="ml-[18px]"><Ico s={24} w={1.700}><rect x="1.500" y="2" width="21" height="20" rx="2" /><path d="M6 10V6.500h4M14 6.500h4V10M18 14v3.500h-4M10 17.500H6V14M6 6.500l3.500 3.500M18 6.500 14.500 10M18 17.500 14.500 14M6 17.500 9.500 14" /></Ico></button>
      <button aria-label="缩小" className="ml-[17px]"><Ico s={16} w={2}><path d="M2 12h20" /></Ico></button>
      <input
        type="range"
        aria-label="缩放"
        min={0}
        max={100}
        defaultValue={11}
        className="ml-[6px] h-[18px] w-[150px] appearance-none bg-[linear-gradient(to_right,#000_24px,#d9d9d9_24px)] bg-[length:100%_3px] bg-center bg-no-repeat [&::-webkit-slider-thumb]:size-[18px] [&::-webkit-slider-thumb]:appearance-none [&::-webkit-slider-thumb]:rounded-full [&::-webkit-slider-thumb]:border-[3px] [&::-webkit-slider-thumb]:border-black [&::-webkit-slider-thumb]:bg-white"
      />
      <button aria-label="放大" className="ml-2"><Ico s={16} w={2}><path d="M12 2v20M2 12h20" /></Ico></button>
      <div className="relative ml-5 w-[67px]">
        <select aria-label="缩放比例" defaultValue="55%" className="w-full appearance-none bg-transparent text-[18px] text-[#222]"><option>55%</option></select>
        <Caret className="pointer-events-none absolute top-1/2 right-2 -translate-y-1/2" />
      </div>
      <button aria-label="全屏" className="ml-4"><Ico s={24} w={1.800}><path d="M1.500 8V2.500H8M16 2.500h6.500V8M22.500 16v5.500H16M8 21.500H1.500V16" /></Ico></button>
      <button aria-label="适应宽度" className="mr-[30px] ml-7"><Ico s={24} w={1.600}><rect x="1.500" y="2.500" width="21" height="19" /><path d="M5.500 12h13M7 10.500 5.500 12 7 13.500M17 10.500l1.500 1.500-1.500 1.500" /></Ico></button>
    </footer>
  );
}

export default function App() {
  return (
    <div className="flex h-screen flex-col overflow-hidden bg-[#f5f5f5] font-['Noto_Sans','Noto_Sans_CJK_SC',sans-serif]">
      <TitleBar />
      <MenuRow />
      <Ribbon />
      <div className="flex min-h-0 flex-1">
        <main className="relative min-w-0 flex-1 overflow-hidden bg-white">
          <MindMap />
          <FloatingToolbar />
          <button aria-label="收起面板" className="absolute top-0 right-0 flex h-[76px] w-[34px] items-center justify-center rounded-l-md border border-r-0 border-[#dedede] bg-[#f5f5f5] text-[#333]">
            <Ico s={20} w={2.200}><path d="m8 3 8 9-8 9" /></Ico>
          </button>
          <span className="absolute top-[383px] right-0 h-[469px] w-[14px] rounded-md bg-[#cfcfd1]" />
          <span className="absolute bottom-0 left-[578px] h-[14px] w-[639px] rounded-md bg-[#cfcfd1]" />
        </main>
        <FormatPanel />
      </div>
      <StatusBar />
    </div>
  );
}
